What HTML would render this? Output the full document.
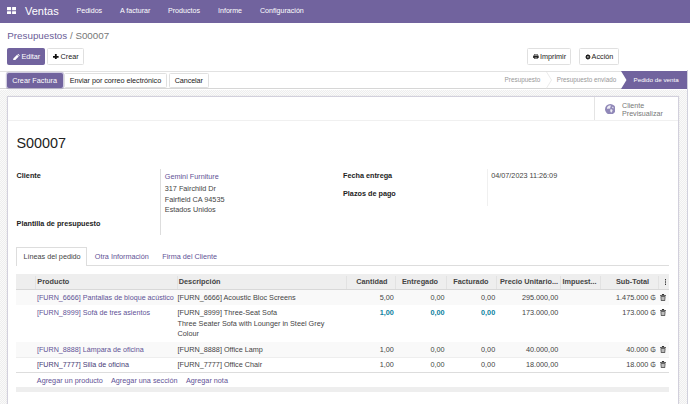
<!DOCTYPE html>
<html><head><meta charset="utf-8">
<style>
*{box-sizing:border-box;margin:0;padding:0}
html,body{width:690px;height:404px;overflow:hidden;background:#fff;font-family:"Liberation Sans",sans-serif;color:#4c4c4c}
body{position:relative}
.abs{position:absolute;white-space:nowrap}
#nav{position:absolute;left:0;top:0;width:690px;height:22.7px;background:#71639e}
#nav .abs{color:#fff;font-size:7.1px;line-height:22.7px;top:0}
.btn{position:absolute;border-radius:1.5px;font-size:7.25px;border:0.6px solid #e0e0e0;background:#fff;color:#222;white-space:nowrap}
.btn.p{background:#71639e;border-color:#71639e;color:#fff}
.btn span{position:absolute;top:0}
.lbl{font-weight:bold;font-size:7.25px;color:#222;line-height:9px}
.t{font-size:7.25px;color:#444;line-height:9px}
.lnk{color:#5f5396}
.num{text-align:right}
</style></head><body>
<div id="nav">
<svg class="abs" style="left:7px;top:7px" width="9.2" height="7.4" viewBox="0 0 9.2 7.4"><g fill="#fff"><rect x="0" y="0" width="4.1" height="3.2" rx=".3"/><rect x="5.1" y="0" width="4.1" height="3.2" rx=".3"/><rect x="0" y="4.2" width="4.1" height="3.2" rx=".3"/><rect x="5.1" y="4.2" width="4.1" height="3.2" rx=".3"/></g></svg>
<div class="abs" style="left:25px;font-size:11px">Ventas</div>
<div class="abs" style="left:76.5px">Pedidos</div>
<div class="abs" style="left:120px">A facturar</div>
<div class="abs" style="left:168px">Productos</div>
<div class="abs" style="left:218px">Informe</div>
<div class="abs" style="left:260px">Configuración</div>
</div>
<div class="abs" style="left:7.3px;top:29px;font-size:9.8px;line-height:13px;color:#6a5d98">Presupuestos <span style="color:#777">/ S00007</span></div>
<div class="btn p" style="left:7.2px;top:48px;width:37.8px;height:16.8px;line-height:15.6px"><svg class="abs" style="left:5.1px;top:4.6px" width="6.6" height="6.6" viewBox="0 0 7 7"><path d="M0 7 L0.4 4.8 L4.3 0.9 L6.1 2.7 L2.2 6.6 Z M4.8 0.4 L5.2 0 Q5.6 -0.2 6 0.2 L6.8 1 Q7.2 1.4 7 1.8 L6.6 2.2 Z" fill="#fff"/></svg><span style="left:13.4px;letter-spacing:-0.08px">Editar</span></div>
<div class="btn" style="left:47.3px;top:48px;width:36.5px;height:16.8px;line-height:15.6px"><svg class="abs" style="left:5px;top:4.9px" width="5.6" height="5.6" viewBox="0 0 56 56"><path d="M19 0 H37 V19 H56 V37 H37 V56 H19 V37 H0 V19 H19 Z" fill="#111"/></svg><span style="left:12.2px">Crear</span></div>
<div class="btn" style="left:527.3px;top:48px;width:43.8px;height:16.6px;line-height:15.4px"><svg class="abs" style="left:4.5px;top:5.2px" width="5.8" height="5.2" viewBox="0 0 60 56"><path d="M12 0 H48 V16 H12 Z M18 5 V16 H42 V5 Z" fill="#222" fill-rule="evenodd"/><path d="M4 16 H56 Q60 16 60 20 V42 H0 V20 Q0 16 4 16 Z" fill="#222"/><path d="M12 32 H48 V56 H12 Z" fill="#222"/><path d="M17 37 H43 V51 H17 Z" fill="#aaa"/></svg><span style="left:11.6px">Imprimir</span></div>
<div class="btn" style="left:579.4px;top:48px;width:39.2px;height:16.6px;line-height:15.4px"><svg class="abs" style="left:4.45px;top:5.05px" width="5.9" height="5.9" viewBox="0 0 58 58"><path d="M29 0 L37 11 L48 10 L47 21 L58 29 L47 37 L48 48 L37 47 L29 58 L21 47 L10 48 L11 37 L0 29 L11 21 L10 10 L21 11 Z M29 22 A7 7 0 1 0 29.01 22 Z" fill="#1a1a1a" fill-rule="evenodd"/></svg><span style="left:11.2px">Acción</span></div>
<div style="position:absolute;left:0;top:70.6px;width:687px;height:18.9px;border-top:0.6px solid #e2e2e2;border-bottom:0.6px solid #d6d6d6;background:#fff"></div>
<div class="btn p" style="left:6.6px;top:73px;width:56px;height:14.6px;line-height:13.4px;text-align:center;box-shadow:0 0 0 1.2px rgba(113,99,158,.33)">Crear Factura</div>
<div class="btn" style="left:63.8px;top:73px;width:103.2px;height:14.6px;line-height:13.4px;text-align:center;letter-spacing:-0.04px">Enviar por correo electrónico</div>
<div class="btn" style="left:169px;top:73px;width:39.5px;height:14.6px;line-height:13.4px;text-align:center;letter-spacing:-0.13px">Cancelar</div>
<div class="abs" style="left:504.5px;top:71px;font-size:6.4px;line-height:18px;color:#999">Presupuesto</div>
<div class="abs" style="left:556.7px;top:71px;font-size:6.35px;line-height:18px;color:#999">Presupuesto enviado</div>
<svg class="abs" style="left:546px;top:71px" width="10" height="18" viewBox="0 0 10 18"><path d="M0 0 L5.5 9 L0 18" fill="none" stroke="#ddd" stroke-width="0.6"/></svg>
<svg class="abs" style="left:621px;top:71px" width="66" height="18" viewBox="0 0 66 18"><path d="M0 0 H66 V18 H0 L5.5 9 Z" fill="#71639e"/></svg>
<div class="abs" style="left:633.5px;top:71px;font-size:6.25px;line-height:18px;color:#fff">Pedido de venta</div>
<div style="position:absolute;left:0;top:89.5px;width:687.3px;height:315px;background:repeating-conic-gradient(#eeeeee 0% 25%,#fafafa 0% 50%) 0 0/2px 2px"></div>
<div style="position:absolute;left:687.2px;top:70px;width:0.7px;height:334px;background:#d0d0dc"></div>
<div style="position:absolute;left:7px;top:96px;width:672px;height:310px;background:#fff;border:1px solid #d2d0dc;box-shadow:0 0 1.5px rgba(0,0,0,.08)"></div>
<div style="position:absolute;left:8.4px;top:119.7px;width:669.6px;height:0.6px;background:#f0f0f0"></div>
<div style="position:absolute;left:594px;top:96.8px;width:0.6px;height:23px;background:#e4e4e4"></div>
<svg class="abs" style="left:604.5px;top:103.7px" width="10.6" height="10.6" viewBox="0 0 106 106"><circle cx="53" cy="53" r="53" fill="#9088b8"/><path d="M22 30 Q34 12 54 12 L60 22 L50 30 L56 40 L44 48 L36 44 L30 50 L20 44 Z M52 56 L66 52 L76 60 L72 76 L62 88 L54 74 Z M74 24 L86 34 L84 44 L72 38 Z" fill="#fff" opacity=".85"/></svg>
<div class="abs" style="left:622px;top:101.9px;font-size:7.15px;line-height:8.3px;color:#777">Cliente<br>Previsualizar</div>
<div class="abs" style="left:16.4px;top:133.3px;font-size:14.4px;line-height:20px;color:#222">S00007</div>
<div class="abs lbl" style="left:16.6px;top:171.2px">Cliente</div>
<div class="abs lbl" style="left:16.6px;top:218.7px">Plantilla de presupuesto</div>
<div style="position:absolute;left:160.2px;top:169.4px;width:0.6px;height:66px;background:#ddd"></div>
<div class="abs t lnk" style="left:164.8px;top:172px">Gemini Furniture</div>
<div class="abs t" style="left:164.8px;top:183.9px;line-height:10.7px">317 Fairchild Dr<br>Fairfield CA 94535<br>Estados Unidos</div>
<div class="abs lbl" style="left:343px;top:171.2px">Fecha entrega</div>
<div class="abs lbl" style="left:343px;top:189.3px">Plazos de pago</div>
<div style="position:absolute;left:486.5px;top:169.4px;width:0.6px;height:37px;background:#f0f0f0"></div>
<div class="abs t" style="left:491.2px;top:171.2px">04/07/2023 11:26:09</div>
<div style="position:absolute;left:16.2px;top:264.8px;width:652.8px;height:0.6px;background:#ddd"></div>
<div style="position:absolute;left:16.2px;top:246.9px;width:71.2px;height:18.8px;border:0.6px solid #ddd;border-bottom:none;background:#fff"></div>
<div class="abs t" style="left:23.4px;top:251.8px;color:#444">Líneas del pedido</div>
<div class="abs t lnk" style="left:94.8px;top:251.8px">Otra Información</div>
<div class="abs t lnk" style="left:162.3px;top:251.8px">Firma del Cliente</div>
<div style="position:absolute;left:16.2px;top:274px;width:652.8px;height:16.3px;background:#eee;border-bottom:0.6px solid #d8d8d8"></div>
<div style="position:absolute;left:35.3px;top:275.5px;width:0.6px;height:13.5px;background:#e2e2e2"></div>
<div style="position:absolute;left:176.5px;top:275.5px;width:0.6px;height:13.5px;background:#e2e2e2"></div>
<div style="position:absolute;left:345.7px;top:275.5px;width:0.6px;height:13.5px;background:#e2e2e2"></div>
<div style="position:absolute;left:394.5px;top:275.5px;width:0.6px;height:13.5px;background:#e2e2e2"></div>
<div style="position:absolute;left:445.5px;top:275.5px;width:0.6px;height:13.5px;background:#e2e2e2"></div>
<div style="position:absolute;left:496.3px;top:275.5px;width:0.6px;height:13.5px;background:#e2e2e2"></div>
<div style="position:absolute;left:560.3px;top:275.5px;width:0.6px;height:13.5px;background:#e2e2e2"></div>
<div style="position:absolute;left:600.2px;top:275.5px;width:0.6px;height:13.5px;background:#e2e2e2"></div>
<div style="position:absolute;left:658.3px;top:275.5px;width:0.6px;height:13.5px;background:#e2e2e2"></div>
<div class="abs lbl" style="left:37.3px;top:277.3px;color:#444;font-size:7.3px">Producto</div>
<div class="abs lbl" style="left:178.8px;top:277.3px;color:#444;font-size:7.3px">Descripción</div>
<div class="abs lbl" style="left:356.3px;top:277.3px;color:#444;font-size:7.3px">Cantidad</div>
<div class="abs lbl" style="left:402px;top:277.3px;color:#444;font-size:7.3px">Entregado</div>
<div class="abs lbl" style="left:453.3px;top:277.3px;color:#444;font-size:7.3px">Facturado</div>
<div class="abs lbl" style="left:500px;top:277.3px;color:#444;font-size:7.3px">Precio Unitario...</div>
<div class="abs lbl" style="left:562.5px;top:277.3px;color:#444;font-size:7.3px">Impuest...</div>
<div class="abs lbl" style="left:616px;top:277.3px;color:#444;font-size:7.3px">Sub-Total</div>
<svg class="abs" style="left:664.6px;top:279.3px" width="1.6" height="6" viewBox="0 0 16 60"><g fill="#333"><rect width="16" height="14"/><rect y="23" width="16" height="14"/><rect y="46" width="16" height="14"/></g></svg>
<div style="position:absolute;left:16.2px;top:290.4px;width:652.8px;height:14.8px;background:#f9f9f9"></div>
<div style="position:absolute;left:16.2px;top:342px;width:652.8px;height:15px;background:#f9f9f9"></div>
<div style="position:absolute;left:16.2px;top:357px;width:652.8px;height:0.6px;background:#eee"></div>
<div style="position:absolute;left:16.2px;top:371.8px;width:652.8px;height:0.6px;background:#ddd"></div>
<div style="position:absolute;left:16.2px;top:387px;width:652.8px;height:4.6px;background:#eee"></div>
<div class="abs t lnk" style="left:37px;top:294.4px;font-size:7.17px">[FURN_6666] Pantallas de bloque acústico</div>
<div class="abs t" style="left:177.6px;top:293.40px">[FURN_6666] Acoustic Bloc Screens</div>
<div class="abs t num" style="right:296.2px;top:293.4px">5,00</div>
<div class="abs t num" style="right:245.4px;top:293.4px">0,00</div>
<div class="abs t num" style="right:194.8px;top:293.4px">0,00</div>
<div class="abs t num" style="right:131.8px;top:293.4px">295.000,00</div>
<div class="abs t num" style="right:34.0px;top:293.4px">1.475.000 ₲</div>
<svg class="abs" style="left:659.8px;top:293.9px" width="6" height="6.9" viewBox="0 0 56 64"><path d="M0 9 H56 V17 H0 Z M18 0 H38 V9 H18 Z M5 20 H51 L48 64 H8 Z M14 27 L15 57 H41 L42 27 Z M22 27 V57 H25 V27 Z M31 27 V57 H34 V27 Z" fill="#333" fill-rule="evenodd"/></svg>
<div class="abs t lnk" style="left:37px;top:309.2px;font-size:7.17px">[FURN_8999] Sofá de tres asientos</div>
<div class="abs t" style="left:177.6px;top:308.20px">[FURN_8999] Three-Seat Sofa</div>
<div class="abs t" style="left:177.6px;top:318.75px">Three Seater Sofa with Lounger in Steel Grey</div>
<div class="abs t" style="left:177.6px;top:329.30px">Colour</div>
<div class="abs t num" style="right:296.2px;top:308.2px;font-weight:bold;color:#0b7fa0">1,00</div>
<div class="abs t num" style="right:245.4px;top:308.2px;font-weight:bold;color:#0b7fa0">0,00</div>
<div class="abs t num" style="right:194.8px;top:308.2px;font-weight:bold;color:#0b7fa0">0,00</div>
<div class="abs t num" style="right:131.8px;top:308.2px">173.000,00</div>
<div class="abs t num" style="right:34.0px;top:308.2px">173.000 ₲</div>
<svg class="abs" style="left:659.8px;top:308.7px" width="6" height="6.9" viewBox="0 0 56 64"><path d="M0 9 H56 V17 H0 Z M18 0 H38 V9 H18 Z M5 20 H51 L48 64 H8 Z M14 27 L15 57 H41 L42 27 Z M22 27 V57 H25 V27 Z M31 27 V57 H34 V27 Z" fill="#333" fill-rule="evenodd"/></svg>
<div class="abs t lnk" style="left:37px;top:346.2px;font-size:7.17px">[FURN_8888] Lámpara de oficina</div>
<div class="abs t" style="left:177.6px;top:345.20px">[FURN_8888] Office Lamp</div>
<div class="abs t num" style="right:296.2px;top:345.2px">1,00</div>
<div class="abs t num" style="right:245.4px;top:345.2px">0,00</div>
<div class="abs t num" style="right:194.8px;top:345.2px">0,00</div>
<div class="abs t num" style="right:131.8px;top:345.2px">40.000,00</div>
<div class="abs t num" style="right:34.0px;top:345.2px">40.000 ₲</div>
<svg class="abs" style="left:659.8px;top:345.7px" width="6" height="6.9" viewBox="0 0 56 64"><path d="M0 9 H56 V17 H0 Z M18 0 H38 V9 H18 Z M5 20 H51 L48 64 H8 Z M14 27 L15 57 H41 L42 27 Z M22 27 V57 H25 V27 Z M31 27 V57 H34 V27 Z" fill="#333" fill-rule="evenodd"/></svg>
<div class="abs t lnk" style="left:37px;top:361.2px;font-size:7.17px;color:#463b76">[FURN_7777] Silla de oficina</div>
<div class="abs t" style="left:177.6px;top:360.20px">[FURN_7777] Office Chair</div>
<div class="abs t num" style="right:296.2px;top:360.2px">1,00</div>
<div class="abs t num" style="right:245.4px;top:360.2px">0,00</div>
<div class="abs t num" style="right:194.8px;top:360.2px">0,00</div>
<div class="abs t num" style="right:131.8px;top:360.2px">18.000,00</div>
<div class="abs t num" style="right:34.0px;top:360.2px">18.000 ₲</div>
<svg class="abs" style="left:659.8px;top:360.7px" width="6" height="6.9" viewBox="0 0 56 64"><path d="M0 9 H56 V17 H0 Z M18 0 H38 V9 H18 Z M5 20 H51 L48 64 H8 Z M14 27 L15 57 H41 L42 27 Z M22 27 V57 H25 V27 Z M31 27 V57 H34 V27 Z" fill="#333" fill-rule="evenodd"/></svg>
<div class="abs t lnk" style="left:36.8px;top:376px">Agregar un producto</div>
<div class="abs t lnk" style="left:111px;top:376px">Agregar una sección</div>
<div class="abs t lnk" style="left:186px;top:376px">Agregar nota</div>
</body></html>
